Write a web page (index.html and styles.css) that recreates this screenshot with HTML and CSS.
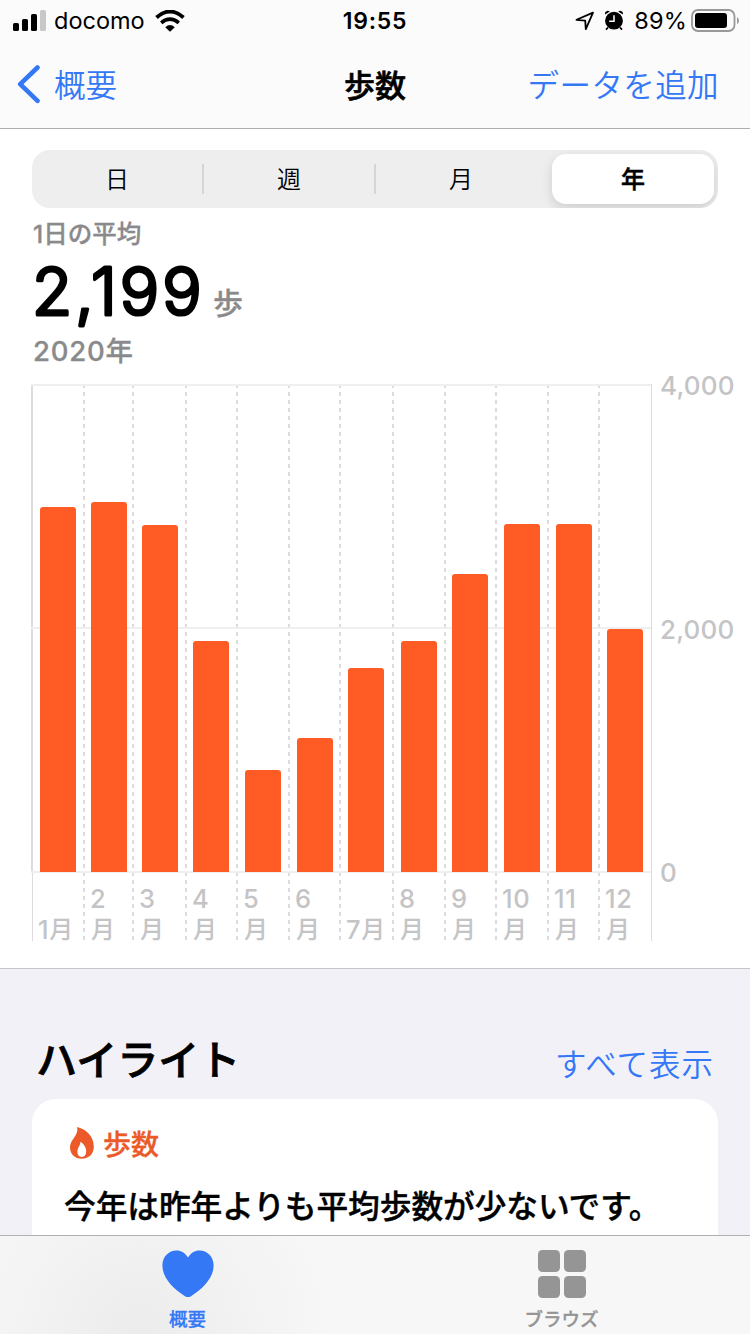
FILE: index.html
```html
<!DOCTYPE html>
<html lang="ja">
<head>
  <meta charset="UTF-8">
  <meta name="viewport" content="width=device-width, initial-scale=1.0">
  <title>歩数</title>
  <link rel="stylesheet" href="styles.css">
</head>
<body>
  <header>
    <div class="status-bar">
      <div class="status-left">
        <svg width="34" height="22" viewBox="0 0 34 22">
          <rect x="0" y="13" width="6" height="8" rx="1.6"/>
          <rect x="9" y="9" width="6" height="12" rx="1.6"/>
          <rect x="18" y="4" width="6" height="17" rx="1.6"/>
          <rect x="27" y="0" width="6" height="21" rx="1.6" fill="#c8c8c8"/>
        </svg>
        <span class="carrier">docomo</span>
        <svg class="wifi" width="30" height="22" viewBox="0 0 30 22">
          <path d="M1.5 7.5Q15 -4.5 28.5 7.5" fill="none" stroke="#000" stroke-width="3.8"/>
          <path d="M6.2 12.8Q15 5.4 23.8 12.8" fill="none" stroke="#000" stroke-width="3.7"/>
          <path d="M10.2 17.2Q15 12.6 19.8 17.2L15 21.8Z"/>
        </svg>
      </div>
      <div class="clock">19:55</div>
      <div class="status-right">
        <svg class="location" width="20" height="20" viewBox="0 0 20 20">
          <path d="M1.5 8.8L18 1.6L10.8 18.1L10.2 9.6Z" fill="none" stroke="#000" stroke-width="1.8" stroke-linejoin="round"/>
        </svg>
        <svg class="alarm" width="20" height="21" viewBox="0 0 20 21">
          <circle cx="10" cy="10.7" r="8.9"/>
          <path d="M1.2 4.6Q.3 1.5 3.2 .9Q4.8 .7 5.8 1.6ZM18.8 4.6Q19.7 1.5 16.8 .9Q15.2 .7 14.2 1.6Z"/>
          <path d="M4 17.5L2 19.6M16 17.5L18 19.6" stroke="#000" stroke-width="1.8"/>
          <path d="M10 5.2V11.3H5.2" fill="none" stroke="#fff" stroke-width="1.5"/>
        </svg>
        <span class="percent">89%</span>
        <svg class="battery" width="49" height="24" viewBox="0 0 49 24">
          <rect x="1" y="1" width="42.5" height="21" rx="6" fill="none" stroke="#999" stroke-width="1.8"/>
          <rect x="4" y="4" width="32" height="15" rx="3"/>
          <path d="M46 8Q48 9 48 11.5Q48 14 46 15Z" fill="#999"/>
        </svg>
      </div>
    </div>
    <nav class="nav-bar">
      <a class="back">
        <svg width="24" height="40" viewBox="0 0 24 40">
          <path d="M20.5 3.5L3.2 20.2L20.5 36.8" fill="none" stroke="#3478f6" stroke-width="4.6" stroke-linecap="round" stroke-linejoin="round"/>
        </svg>
        <span>概要</span>
      </a>
      <h1>歩数</h1>
      <a class="add">データを追加</a>
    </nav>
  </header>

  <section class="steps">
    <div class="segments">
      <div>日</div>
      <div>週</div>
      <div>月</div>
      <div class="selected">年</div>
    </div>

    <div class="summary">
      <div class="caption">1日の平均</div>
      <div class="value">
        <svg width="172" height="100" viewBox="0 0 172 100"><text x="-1" y="68.5">2,199</text></svg>
        <span class="unit">歩</span>
      </div>
      <div class="year">2020年</div>
    </div>

    <div class="chart">
      <div class="months">
        <div class="month"><div class="plot"><div class="bar" style="height: 365px"></div></div><div class="label">1<b>月</b></div></div>
        <div class="month"><div class="plot"><div class="bar" style="height: 370px"></div></div><div class="label two-line">2<b>月</b></div></div>
        <div class="month"><div class="plot"><div class="bar" style="height: 347px"></div></div><div class="label two-line">3<b>月</b></div></div>
        <div class="month"><div class="plot"><div class="bar" style="height: 231px"></div></div><div class="label two-line">4<b>月</b></div></div>
        <div class="month"><div class="plot"><div class="bar" style="height: 102px"></div></div><div class="label two-line">5<b>月</b></div></div>
        <div class="month"><div class="plot"><div class="bar" style="height: 134px"></div></div><div class="label two-line">6<b>月</b></div></div>
        <div class="month"><div class="plot"><div class="bar" style="height: 204px"></div></div><div class="label">7<b>月</b></div></div>
        <div class="month"><div class="plot"><div class="bar" style="height: 231px"></div></div><div class="label two-line">8<b>月</b></div></div>
        <div class="month"><div class="plot"><div class="bar" style="height: 298px"></div></div><div class="label two-line">9<b>月</b></div></div>
        <div class="month"><div class="plot"><div class="bar" style="height: 348px"></div></div><div class="label two-line">10<b>月</b></div></div>
        <div class="month"><div class="plot"><div class="bar" style="height: 348px"></div></div><div class="label two-line">11<b>月</b></div></div>
        <div class="month"><div class="plot"><div class="bar" style="height: 243px"></div></div><div class="label two-line">12<b>月</b></div></div>
      </div>
      <div class="axis">
        <span>4,000</span>
        <span>2,000</span>
        <span>0</span>
      </div>
    </div>
  </section>

  <section class="highlights">
    <div class="heading">
      <h2>ハイライト</h2>
      <a>すべて表示</a>
    </div>
    <div class="card">
      <div class="card-title">
        <svg width="26" height="34" viewBox="0 0 26 34">
          <path d="M8.2 1C16 2.8 24.8 9.5 24.8 20.5C24.8 28 20 32.7 12.8 32.7C5.4 32.7 1 27.8 1 21.2C1 13.2 9.8 10.2 8.2 1Z" fill="#eb5a28"/>
          <path d="M11.4 15.8C14 17.5 17.2 20.8 17.2 25.3C17.2 29 15.6 31 12.7 31C9.9 31 8.4 29 8.4 25.6C8.4 21.5 11.5 19.5 11.4 15.8Z" fill="#fff"/>
        </svg>
        <span>歩数</span>
      </div>
      <p>今年は昨年よりも平均歩数が少ないです。</p>
    </div>
  </section>

  <footer>
    <a class="tab active">
      <svg width="52" height="48" viewBox="0 0 52 48">
        <path d="M26 7.6C23.2 2.8 19.2 .5 14.6 .5C6.7 .5 .4 6.5 .4 15.6C.4 28 11 38.5 23 46.2Q26 48 29 46.2C41 38.5 51.6 28 51.6 15.6C51.6 6.5 45.3 .5 37.4 .5C32.8 .5 28.8 2.8 26 7.6Z" fill="#3478f6"/>
      </svg>
      <span>概要</span>
    </a>
    <a class="tab browse">
      <svg width="48" height="48" viewBox="0 0 48 48" fill="#959595">
        <rect x="0" y="0" width="22" height="22" rx="4.5"/>
        <rect x="26" y="0" width="22" height="22" rx="4.5"/>
        <rect x="0" y="26" width="22" height="22" rx="4.5"/>
        <rect x="26" y="26" width="22" height="22" rx="4.5"/>
      </svg>
      <span>ブラウズ</span>
    </a>
  </footer>
</body>
</html>
```
FILE: styles.css
```css
* {
  box-sizing: border-box;
}
body {
  margin: 0;
  width: 750px;
  height: 1334px;
  overflow: hidden;
  display: flex;
  flex-direction: column;
  font-family: Inter, "Noto Sans CJK JP", sans-serif;
  color: #000;
  background: #f2f1f7;
}
h1, h2, p {
  margin: 0;
}
svg {
  display: block;
  flex: none;
}
header {
  height: 129px;
  flex: none;
  background: #fbfbfc;
  border-bottom: 1px solid #aeaeb0;
}
.status-bar {
  display: grid;
  grid-template-columns: 1fr 80px 1fr;
  align-items: center;
  height: 40px;
  font-size: 24px;
  line-height: 40px;
}
.status-left, .status-right {
  display: flex;
  align-items: center;
}
.status-left {
  padding-left: 13px;
}
.status-right {
  justify-content: flex-end;
  padding-right: 10px;
}
.carrier {
  margin-left: 7px;
  padding-top: 1px;
  font-size: 23.5px;
}
.wifi {
  margin-left: 10px;
}
.clock {
  padding-top: 1px;
  text-align: center;
  font-weight: 600;
  font-size: 23px;
  letter-spacing: 0.8px;
}
.location {
  margin-right: 1px;
}
.alarm {
  margin-left: 8px;
}
.percent {
  margin: 0 4px 0 10px;
  padding-top: 1px;
  font-size: 23.5px;
  letter-spacing: 0.2px;
}
.nav-bar {
  display: grid;
  grid-template-columns: 1fr 80px 1fr;
  align-items: center;
  height: 88px;
  font-size: 31.5px;
  line-height: 40px;
}
.nav-bar a, .heading a {
  color: #3478f6;
  font-weight: 350;
}
.nav-bar span, .nav-bar h1, .add {
  padding-top: 3px;
}
.back {
  display: flex;
  align-items: center;
  gap: 13px;
  padding-left: 17px;
}
.nav-bar h1 {
  font-size: 31px;
  font-weight: 500;
  text-align: center;
  -webkit-text-stroke: 0.6px;
}
.add {
  text-align: right;
  padding-right: 31px;
  letter-spacing: 0.4px;
}
.steps {
  height: 840px;
  flex: none;
  padding: 21px 0 0 31px;
  background: #fff;
  border-bottom: 1px solid #c5c5c8;
}
.segments {
  display: flex;
  width: 686px;
  height: 58px;
  margin-left: 1px;
  padding: 4px 4px 4px 0;
  border-radius: 18px;
  background: #eee;
  font-size: 24px;
  font-weight: 350;
  line-height: 51px;
  overflow: hidden;
}
.segments div {
  width: 172px;
  padding-right: 2px;
  text-align: center;
  background: linear-gradient(#d5d5d6, #d5d5d6) no-repeat right 10px / 2px 30px;
}
.segments div:nth-child(3) {
  background: none;
}
.segments .selected {
  flex: none;
  width: 162px;
  margin-left: 4px;
  padding: 0;
  border-radius: 14px;
  background: #fff;
  box-shadow: 0 4px 12px rgba(0, 0, 0, 0.14);
  font-weight: 500;
  -webkit-text-stroke: 0.5px;
}
.summary {
  height: 176px;
  padding-left: 2px;
  color: #8a8a8c;
  font-weight: 500;
  -webkit-text-stroke: 0.3px;
}
.caption {
  height: 52px;
  font-size: 24.5px;
  line-height: 53px;
}
.value {
  display: flex;
  height: 72px;
}
.value svg {
  margin-top: -14px;
}
/* rounded stroke softens the digit ends */
.value text {
  font-size: 65.5px;
  font-weight: 300;
  letter-spacing: 3px;
  fill: #000;
  stroke: #000;
  stroke-width: 3.2;
  stroke-linejoin: round;
}
.unit {
  margin: 21px 0 0 8px;
  font-size: 30px;
  line-height: 44px;
}
.year {
  font-size: 27.5px;
  line-height: 38px;
  letter-spacing: 0.8px;
}
.chart {
  display: flex;
  height: 557px;
  color: #c4c4c6;
}
.months {
  display: grid;
  grid-template-columns: 52px 49px 53px 51px 52px 51px 53px 52px 51px 52px 51px 53px;
  width: 621px;
  height: 557px;
  border-right: 1px solid #dcdcde;
}
.month {
  background: repeating-linear-gradient(#dcdcde 0 4px, transparent 4px 8px) no-repeat left top / 2px 100%;
}
.month:first-child {
  background: linear-gradient(#dcdcde, #dcdcde) no-repeat left top / 2px 488px, linear-gradient(#dcdcde, #dcdcde) no-repeat 1px 0 / 1px 100%;
}
.plot {
  display: flex;
  align-items: flex-end;
  height: 489px;
  padding: 0 0 1px 9px;
  background:
    linear-gradient(#efeff0, #efeff0) no-repeat 0 0 / 100% 2px,
    linear-gradient(#efeff0, #efeff0) no-repeat 0 243px / 100% 2px,
    linear-gradient(#efeff0, #efeff0) no-repeat 0 487px / 100% 2px;
}
.month:nth-child(2) .plot,
.month:nth-child(4) .plot,
.month:nth-child(9) .plot {
  padding-left: 8px;
}
.month:nth-child(3) .plot {
  padding-left: 10px;
}
.bar {
  width: 36px;
  border-radius: 3px 3px 0 0;
  background: #ff5b25;
}
.label {
  display: flex;
  height: 68px;
  padding: 41px 0 0 7px;
  font-size: 25.5px;
  font-weight: 450;
  line-height: 31px;
  letter-spacing: 0.6px;
}
.label b {
  font-size: 24px;
  font-weight: 500;
}
.two-line {
  flex-direction: column;
  padding-top: 10px;
}
.two-line b {
  padding-left: 1px;
}
.axis {
  display: flex;
  flex-direction: column;
  justify-content: space-between;
  height: 519px;
  margin: -14px 0 0 8px;
  font-size: 26px;
  font-weight: 450;
  line-height: 32px;
  letter-spacing: 0.2px;
}
.highlights {
  flex: 1;
  min-height: 0;
  padding: 62px 32px 0;
  overflow: hidden;
}
.heading {
  display: flex;
  justify-content: space-between;
  height: 68px;
  padding: 0 4px 0 4px;
  line-height: 58px;
}
.heading h2 {
  font-size: 41px;
  font-weight: 500;
  -webkit-text-stroke: 0.8px;
}
.heading a {
  font-size: 31.5px;
  line-height: 67px;
  letter-spacing: 1px;
}
.card {
  height: 160px;
  padding: 26px 32px 0;
  border-radius: 24px;
  background: #fff;
}
.card-title {
  display: flex;
  align-items: center;
  gap: 8px;
  height: 36px;
  padding-left: 5px;
  color: #eb5a28;
  font-size: 28px;
  font-weight: 500;
  line-height: 36px;
  -webkit-text-stroke: 0.3px;
}
.card-title span {
  padding-top: 3px;
}
.card p {
  margin-top: 24px;
  font-size: 31.7px;
  font-weight: 500;
  line-height: 44px;
  letter-spacing: -0.05px;
  white-space: nowrap;
  -webkit-text-stroke: 0.4px;
}
footer {
  display: grid;
  grid-template-columns: 1fr 1fr;
  height: 99px;
  flex: none;
  border-top: 1px solid #b0b0b4;
  background: radial-gradient(circle at 140px 100px, #ececec 0, #f7f7f7 190px);
}
.tab {
  display: flex;
  flex-direction: column;
  align-items: center;
  padding-top: 14px;
  color: #959595;
  font-size: 18.5px;
  font-weight: 500;
  line-height: 24px;
  -webkit-text-stroke: 0.3px;
}
.tab span {
  margin-top: 9px;
}
.browse {
  padding-right: 2px;
}
.active {
  color: #3478f6;
}
```
